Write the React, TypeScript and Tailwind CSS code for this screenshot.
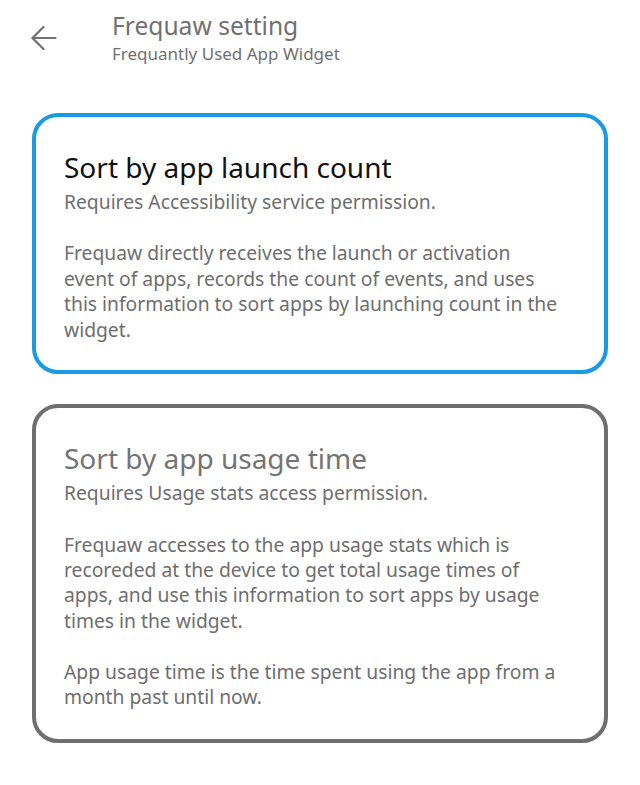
export default function App() {
  return (
    <div className="min-h-[785px] bg-white font-['Noto_Sans',sans-serif]">
      <div className="flex items-start pt-[9px] pl-[31px]">
        <button className="mt-[16px] text-[#707070]">
          <svg width="26" height="26" viewBox="0 0 26 26" fill="none" stroke="currentColor" strokeWidth="2.2" strokeLinecap="round" strokeLinejoin="round">
            <path d="M24.5 13H1.5" />
            <path d="M12.5 2L1.5 13l11 11" />
          </svg>
        </button>
        <div className="ml-[55px]">
          <div className="text-[24.6px] leading-[34px] text-[#707070]">Frequaw setting</div>
          <div className="text-[17px] leading-[22px] text-[#707070]">Frequantly Used App Widget</div>
        </div>
      </div>

      <div className="mt-[48px] flex flex-col gap-[30px] pl-[32px] pr-[32px]">
        <div className="rounded-[26px] border-4 border-[#1a9ae0] pl-[28px] pr-[30px] pt-[28px] pb-[28px]">
          <div className="text-[28px] leading-[44px] text-[#111]">Sort by app launch count</div>
          <div className="text-[19.3px] leading-[25px] text-[#6e6e6e]">Requires Accessibility service permission.</div>
          <div className="mt-[26px] text-[19.3px] leading-[25.5px] text-[#6e6e6e]">
            Frequaw directly receives the launch or activation
            <br />
            event of apps, records the count of events, and uses
            <br />
            this information to sort apps by launching count in the
            <br />
            widget.
          </div>
        </div>

        <div className="rounded-[26px] border-4 border-[#6e6e6e] pl-[28px] pr-[30px] pt-[28px] pb-[30px]">
          <div className="text-[28px] leading-[44px] text-[#747474]">Sort by app usage time</div>
          <div className="text-[19.3px] leading-[25px] text-[#6e6e6e]">Requires Usage stats access permission.</div>
          <div className="mt-[27px] text-[19.3px] leading-[25.2px] text-[#6e6e6e]">
            Frequaw accesses to the app usage stats which is
            <br />
            recoreded at the device to get total usage times of
            <br />
            apps, and use this information to sort apps by usage
            <br />
            times in the widget.
          </div>
          <div className="mt-[26px] text-[19.3px] leading-[25.2px] text-[#6e6e6e]">
            App usage time is the time spent using the app from a
            <br />
            month past until now.
          </div>
        </div>
      </div>
    </div>
  );
}
